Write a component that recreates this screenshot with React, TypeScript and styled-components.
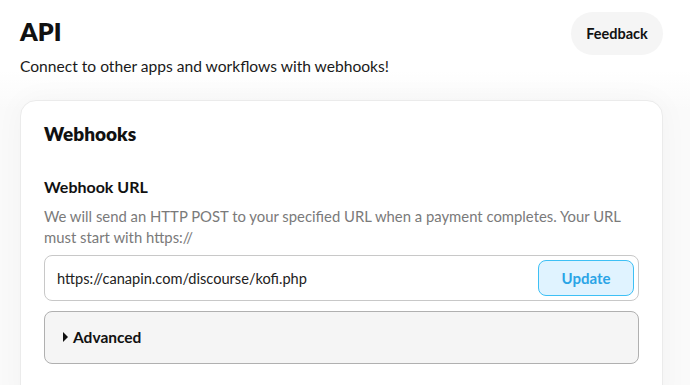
import React from "react";
import styled, { createGlobalStyle } from "styled-components";

const Global = createGlobalStyle`
  html, body { margin: 0; padding: 0; background: #ffffff; }
  body { font-family: Lato, "Noto Sans", sans-serif; color: #111; }
  * { box-sizing: border-box; }
`;

const Page = styled.div`
  width: 690px;
  height: 385px;
  overflow: hidden;
  padding: 12px 27px 0 20px;
  background: linear-gradient(#ffffff 0, #ffffff 70px, #fafafa 110px);
`;

const Header = styled.div`
  display: flex;
  justify-content: space-between;
  align-items: flex-start;
`;

const TitleBlock = styled.div`
  display: flex;
  flex-direction: column;
  padding-top: 3px;
`;

const Title = styled.h1`
  margin: 0;
  font-size: 25px;
  font-weight: 800;
  line-height: 32px;
  color: #111;
`;

const Subtitle = styled.p`
  margin: 9px 0 0;
  font-size: 15.6px;
  line-height: 20px;
  color: #1a1a1a;
`;

const PillButton = styled.button`
  height: 43px;
  width: 92px;
  padding: 0;
  border: none;
  border-radius: 22px;
  background: #f5f5f5;
  font-family: inherit;
  font-size: 14.5px;
  font-weight: 700;
  color: #111;
`;

const Card = styled.section`
  margin-top: 24px;
  background: #fff;
  border: 1px solid #ebebeb;
  border-radius: 16px;
  box-shadow: 0 0 30px rgba(0, 0, 0, 0.035);
  padding: 21px 23px 30px 23px;
  height: 320px;
`;

const CardTitle = styled.h2`
  margin: 0;
  font-size: 19px;
  font-weight: 800;
  line-height: 24px;
`;

const FieldLabel = styled.h3`
  margin: 30px 0 0;
  font-size: 16px;
  font-weight: 700;
  line-height: 22px;
`;

const Help = styled.p`
  margin: 8px 0 0;
  font-size: 14.85px;
  line-height: 21px;
  color: #7a7a7a;
`;

const InputRow = styled.div`
  margin-top: 7px;
  height: 46px;
  border: 1.5px solid #c8c8c8;
  border-radius: 8px;
  display: flex;
  align-items: center;
  justify-content: space-between;
  padding: 0 4px 0 12px;
`;

const UrlText = styled.span`
  font-size: 14.6px;
  color: #222;
`;

const UpdateButton = styled.button`
  width: 96px;
  height: 36px;
  border: 1.5px solid #3ec0f5;
  border-radius: 8px;
  background: #e0f3ff;
  color: #2aa4e6;
  font-family: inherit;
  font-size: 15px;
  font-weight: 700;
`;

const Advanced = styled.div`
  margin-top: 10px;
  height: 53px;
  border: 1px solid #b0b0b0;
  border-radius: 8px;
  background: #f5f5f5;
  display: flex;
  align-items: center;
  gap: 5px;
  padding-left: 18px;
  padding-bottom: 2px;
  font-size: 15.5px;
  font-weight: 700;
  color: #111;
`;

const Caret = styled.span`
  width: 0;
  height: 0;
  border-top: 5px solid transparent;
  border-bottom: 5px solid transparent;
  border-left: 5px solid #111;
`;

export default function App() {
  return (
    <Page>
      <Global />
      <Header>
        <TitleBlock>
          <Title>API</Title>
          <Subtitle>Connect to other apps and workflows with webhooks!</Subtitle>
        </TitleBlock>
        <PillButton>Feedback</PillButton>
      </Header>
      <Card>
        <CardTitle>Webhooks</CardTitle>
        <FieldLabel>Webhook URL</FieldLabel>
        <Help>
          We will send an HTTP POST to your specified URL when a payment completes. Your URL
          must start with https://
        </Help>
        <InputRow>
          <UrlText>https://canapin.com/discourse/kofi.php</UrlText>
          <UpdateButton>Update</UpdateButton>
        </InputRow>
        <Advanced>
          <Caret />
          Advanced
        </Advanced>
      </Card>
    </Page>
  );
}
